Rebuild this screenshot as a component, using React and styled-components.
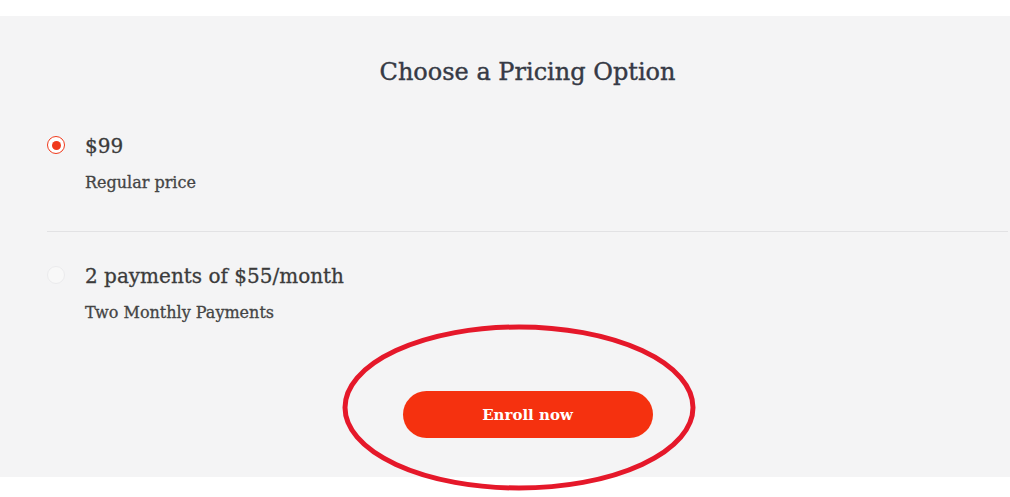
import React, { useState } from "react";
import styled, { createGlobalStyle } from "styled-components";

const GlobalStyle = createGlobalStyle`
  body {
    margin: 0;
    background: #fff;
    font-family: "DejaVu Serif", "Liberation Serif", serif;
  }
`;

const Page = styled.div`
  position: relative;
  padding-top: 16px;
  height: 497px;
  box-sizing: border-box;
  overflow: hidden;
`;

const Panel = styled.section`
  background: #f4f4f5;
  height: 461px;
  box-sizing: border-box;
  padding: 42px 2px 0 47px;
  display: flex;
  flex-direction: column;
`;

Panel.Title = styled.h2`
  margin: 0 0 46px 0;
  text-align: center;
  font-size: 24px;
  font-weight: normal;
  -webkit-text-stroke: 0.4px #363a45;
  color: #363a45;
  line-height: 28px;
`;

const Option = styled.label`
  display: flex;
  align-items: flex-start;
  gap: 20px;
  padding: ${({ first }) => (first ? "0 0 37px 0" : "30px 0 0 0")};
  border-bottom: ${({ first }) => (first ? "1px solid #e2e2e4" : "none")};
  cursor: pointer;
`;

const Radio = styled.span`
  width: 18px;
  height: 18px;
  margin-top: 4px;
  box-sizing: border-box;
  border-radius: 50%;
  flex-shrink: 0;
  border: 1.5px solid ${({ checked }) => (checked ? "#f03a1c" : "#ebebed")};
  background: ${({ checked }) => (checked ? "#fff" : "#f8f8f8")};
  display: flex;
  align-items: center;
  justify-content: center;
  &::after {
    content: "";
    width: 9px;
    height: 9px;
    border-radius: 50%;
    background: ${({ checked }) => (checked ? "#f03a1c" : "transparent")};
  }
`;

Option.Body = styled.div`
  display: flex;
  flex-direction: column;
  gap: 12px;
`;

Option.Price = styled.span`
  font-size: 20px;
  line-height: 28px;
  color: #3b3b3b;
  -webkit-text-stroke: 0.3px #3b3b3b;
`;

Option.Note = styled.span`
  font-size: 16px;
  line-height: 22px;
  color: #444;
  -webkit-text-stroke: 0.3px #444;
`;

const Actions = styled.div`
  display: flex;
  justify-content: center;
  padding-top: 67px;
`;

const EnrollButton = styled.button`
  width: 250px;
  height: 47px;
  border: none;
  border-radius: 24px;
  background: #f5310f;
  color: #fff;
  font-family: "DejaVu Serif", serif;
  font-weight: bold;
  font-size: 15px;
  cursor: pointer;
`;

const Highlight = styled.svg`
  position: absolute;
  left: 340px;
  top: 322px;
  pointer-events: none;
`;

const options = [
  { id: "full", price: "$99", note: "Regular price" },
  { id: "split", price: "2 payments of $55/month", note: "Two Monthly Payments" },
];

export default function App() {
  const [selected, setSelected] = useState("full");
  return (
    <Page>
      <GlobalStyle />
      <Panel>
        <Panel.Title>Choose a Pricing Option</Panel.Title>
        {options.map((o, i) => (
          <Option key={o.id} first={i === 0} onClick={() => setSelected(o.id)}>
            <Radio checked={selected === o.id} />
            <Option.Body>
              <Option.Price>{o.price}</Option.Price>
              <Option.Note>{o.note}</Option.Note>
            </Option.Body>
          </Option>
        ))}
        <Actions>
          <EnrollButton>Enroll now</EnrollButton>
        </Actions>
      </Panel>
      <Highlight width="360" height="172" viewBox="0 0 360 172">
        <ellipse cx="179" cy="85.5" rx="174" ry="80.5" fill="none" stroke="#e5182a" strokeWidth="5" />
      </Highlight>
    </Page>
  );
}
